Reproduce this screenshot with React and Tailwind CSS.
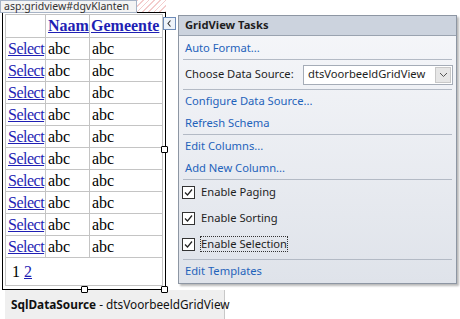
import React from "react";

const ui = { fontFamily: '"Noto Sans", "Open Sans", Arial, sans-serif' };
const serif = { fontFamily: '"Liberation Serif", "Times New Roman", serif' };

function Check() {
  return (
    <span className="w-[13px] h-[13px] border border-[#333] bg-white flex items-center justify-center shrink-0">
      <svg width="11" height="11" viewBox="0 0 11 11">
        <path d="M2 5.5 L4.5 8 L9 2.5" fill="none" stroke="#222" strokeWidth="1.2" />
      </svg>
    </span>
  );
}

function Sep() {
  return <div className="mx-[4px] h-px bg-[#b3bac5]" />;
}

function Link({ children }) {
  return (
    <div className="h-[22px] flex items-center pl-[6px] text-[#1f63bb] text-[11.2px]">
      {children}
    </div>
  );
}

function Handle({ cls }) {
  return <div className={"absolute w-[7px] h-[7px] bg-white border border-black rounded-[1px] " + cls} />;
}

export default function App() {
  const rows = Array.from({ length: 10 });
  const cell = "border border-[#c4c4c4] p-0 leading-[18px]";
  return (
    <div className="w-[460px] h-[319px] bg-white relative overflow-hidden">
      <div className="flex items-start h-[290px]">
        {/* left: control */}
        <div className="w-[166px] flex flex-col relative">
          <div className="flex h-[12px] overflow-visible">
            <div
              className="w-[137px] h-[13px] border border-[#a6b3c6] bg-[#f4f4f4] text-[10.5px] leading-[11px] text-[#333] pl-[3px] whitespace-nowrap relative z-10"
              style={ui}
            >
              asp:gridview#dgvKlanten
            </div>
            <div className="flex-1 h-[12px] bg-[repeating-linear-gradient(135deg,#f3cccc_0px,#f3cccc_1px,#ffffff_1px,#ffffff_4px)]" />
          </div>
          <div className="ml-[2px] w-[164px] h-[278px] border border-black pl-[2px] pt-[1px]">
            <table className="border-collapse table-fixed w-[157px] text-[16px]" style={serif}>
              <colgroup>
                <col className="w-[40px]" />
                <col className="w-[44px]" />
                <col className="w-[73px]" />
              </colgroup>
              <tbody>
                <tr className="h-[23px]">
                  <td className={cell}></td>
                  <td className={cell + " pl-[2px] font-bold text-[#1f1fb4] underline"}>Naam</td>
                  <td className={cell + " pl-[1px] font-bold text-[#1f1fb4] underline"}>Gemeente</td>
                </tr>
                {rows.map((_, i) => (
                  <tr key={i} className="h-[22px]">
                    <td className={cell + " pl-[2px] text-[#1f1fb4] underline tracking-[-0.5px] whitespace-nowrap"}>Select</td>
                    <td className={cell + " pl-[2px] text-black"}>abc</td>
                    <td className={cell + " pl-[2px] text-black"}>abc</td>
                  </tr>
                ))}
                <tr className="h-[28px]">
                  <td colSpan={3} className={cell + " pl-[6px] text-black"}>
                    1 <span className="text-[#1f1fb4] underline">2</span>
                  </td>
                </tr>
              </tbody>
            </table>
          </div>
          <Handle cls="left-[161px] top-[146px]" />
          <Handle cls="left-[81px] top-[286px]" />
          <Handle cls="left-[161px] top-[286px]" />
        </div>

        {/* smart tag button */}
        <div className="absolute left-[163px] top-[17px] w-[13px] h-[13px] border border-[#6d8bb8] bg-[#eef3fa] flex items-center justify-center">
          <svg width="7" height="9" viewBox="0 0 7 9">
            <path d="M4.5 1.5 L2 4.5 L4.5 7.5" fill="none" stroke="#333" strokeWidth="1.1" />
          </svg>
        </div>

        {/* tasks panel */}
        <div
          className="ml-[12px] mt-[15px] w-[279px] h-[269px] border border-[#8d96a3] bg-[linear-gradient(180deg,#f6f7fa_0%,#dfe3ea_100%)] shadow-[2px_2px_2px_rgba(0,0,0,0.28)] flex flex-col text-[#1e1e1e]"
          style={ui}
        >
          <div className="h-[20px] bg-[#ccd3de] border-b border-[#9aa3b0] flex items-center pl-[6px] font-bold text-[11.2px]">
            GridView Tasks
          </div>
          <div className="pt-[1px]">
            <Link>Auto Format...</Link>
          </div>
          <Sep />
          <div className="h-[29px] flex items-center pl-[6px] pr-[3px] text-[11.2px]">
            <span className="flex-1">Choose Data Source:</span>
            <div className="w-[150px] h-[20px] border border-[#a5acb7] bg-white flex items-center">
              <span className="flex-1 pl-[4px] text-[11.2px] whitespace-nowrap">dtsVoorbeeldGridView</span>
              <div className="w-[16px] h-[16px] mr-[1px] bg-[#e6e6e6] border border-[#c8c8c8] flex items-center justify-center">
                <svg width="9" height="6" viewBox="0 0 9 6">
                  <path d="M1 1 L4.5 4.5 L8 1" fill="none" stroke="#555" strokeWidth="1" />
                </svg>
              </div>
            </div>
          </div>
          <Sep />
          <Link>Configure Data Source...</Link>
          <Link>Refresh Schema</Link>
          <Sep />
          <Link>Edit Columns...</Link>
          <Link>Add New Column...</Link>
          <Sep />
          <div className="flex flex-col gap-[6px] pt-[2px] pb-[5px]">
            {["Enable Paging", "Enable Sorting", "Enable Selection"].map((t, i) => (
              <div key={t} className="h-[20px] flex items-center pl-[3px] gap-[6px] text-[11.2px]">
                <Check />
                <span className={i === 2 ? "outline outline-1 outline-dotted outline-[#333] leading-[14px]" : ""}>{t}</span>
              </div>
            ))}
          </div>
          <Sep />
          <Link>Edit Templates</Link>
        </div>
      </div>

      {/* data source box */}
      <div
        className="ml-[5px] w-[220px] h-[29px] bg-[#efefef] border-r border-[#c8c8c8] flex items-center pl-[6px] text-[11.8px] text-[#111] whitespace-nowrap"
        style={ui}
      >
        <span className="font-bold">SqlDataSource</span>
        <span>&nbsp;- dtsVoorbeeldGridView</span>
      </div>
    </div>
  );
}
